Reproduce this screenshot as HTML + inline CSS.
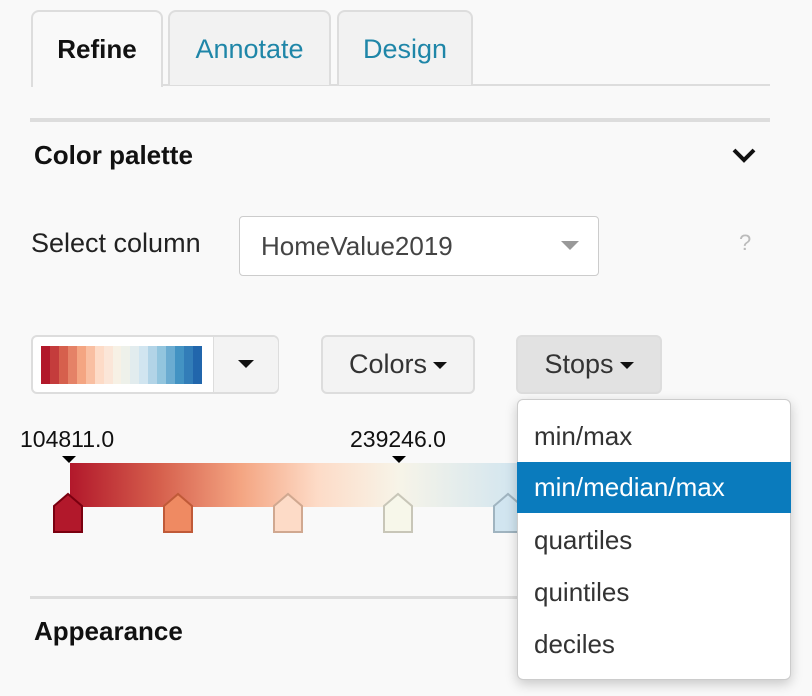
<!DOCTYPE html>
<html><head><style>
body{margin:0;width:812px;height:696px;background:#f9f9f9;font-family:"Liberation Sans",Arial,sans-serif;position:relative;overflow:hidden;color:#222}
.a{position:absolute}
.tab{position:absolute;top:10px;height:75px;border:2px solid #ddd;border-bottom:none;border-radius:8px 8px 0 0;background:#f2f2f2;box-sizing:border-box;font-size:26px;text-align:center;line-height:74px;color:#1f86a8}
.btn{position:absolute;border:2px solid #ddd;border-radius:6px;background:#f3f3f3;box-sizing:border-box;font-size:27px;color:#333;text-align:center}
.caret{display:inline-block;width:0;height:0;border-left:7px solid transparent;border-right:7px solid transparent;border-top:7px solid #111;vertical-align:middle;margin-left:6px}
.item{position:absolute;left:517px;width:274px;height:51px;line-height:51px;padding-left:17px;box-sizing:border-box;font-size:26px;color:#333}
</style></head><body>
<div class="a" style="left:162px;top:84px;width:608px;height:2px;background:#ddd"></div>
<div class="tab" style="left:31px;width:132px;background:#f9f9f9;height:77px;color:#111;font-weight:bold">Refine</div>
<div class="tab" style="left:168px;width:163px;font-size:27px">Annotate</div>
<div class="tab" style="left:337px;width:136px;font-size:27px">Design</div>
<div class="a" style="left:30px;top:118px;width:740px;height:4px;background:#ddd"></div>
<div class="a" style="left:34px;top:140px;font-size:26px;font-weight:bold;color:#111">Color palette</div>
<svg class="a" style="left:731px;top:146px" width="26" height="18"><path d="M3 4 L13 14 L23 4" stroke="#111" stroke-width="4" fill="none"/></svg>
<div class="a" style="left:31px;top:228px;font-size:27px;color:#222">Select column</div>
<div class="a" style="left:239px;top:216px;width:360px;height:60px;border:1px solid #ccc;border-radius:4px;background:#fff;box-sizing:border-box;font-size:26px;line-height:58px;padding-left:21px;color:#444">HomeValue2019</div>
<div class="a" style="left:561px;top:241px;border-left:9px solid transparent;border-right:9px solid transparent;border-top:9px solid #999"></div>
<div class="a" style="left:739px;top:230px;font-size:22px;color:#bbb">?</div>
<div class="btn" style="left:31px;top:335px;width:248px;height:59px;background:#fff"></div>
<div class="a" style="left:213px;top:337px;width:64px;height:55px;background:#f3f3f3;border-left:1px solid #ddd;border-radius:0 5px 5px 0"></div>
<div class="a" style="left:238px;top:360px;border-left:8px solid transparent;border-right:8px solid transparent;border-top:8px solid #111"></div>
<div class="a" style="left:41px;top:346px;width:161px;height:38px;display:flex">
<div style="flex:1;background:#b2182b"></div><div style="flex:1;background:#c43c3c"></div><div style="flex:1;background:#d6604d"></div><div style="flex:1;background:#e58267"></div><div style="flex:1;background:#f4a582"></div><div style="flex:1;background:#f9bfa2"></div><div style="flex:1;background:#fddbc7"></div><div style="flex:1;background:#fbe6d8"></div><div style="flex:1;background:#f7f1e5"></div><div style="flex:1;background:#eef1ea"></div><div style="flex:1;background:#e2ecee"></div><div style="flex:1;background:#d1e5f0"></div><div style="flex:1;background:#b2d4e7"></div><div style="flex:1;background:#92c5de"></div><div style="flex:1;background:#6bacd1"></div><div style="flex:1;background:#4393c3"></div><div style="flex:1;background:#327db8"></div><div style="flex:1;background:#2166ac"></div>
</div>
<div class="btn" style="left:321px;top:335px;width:154px;height:59px;line-height:55px">Colors<span class="caret"></span></div>
<div class="btn" style="left:516px;top:335px;width:146px;height:59px;line-height:55px;background:#e2e2e2">Stops<span class="caret"></span></div>
<div class="a" style="left:20px;top:426px;font-size:23px;color:#111">104811.0</div>
<div class="a" style="left:350px;top:426px;font-size:23px;color:#111">239246.0</div>
<div class="a" style="left:62px;top:456px;border-left:7px solid transparent;border-right:7px solid transparent;border-top:7px solid #000"></div>
<div class="a" style="left:392px;top:456px;border-left:7px solid transparent;border-right:7px solid transparent;border-top:7px solid #000"></div>
<div class="a" style="left:70px;top:463px;width:450px;height:44px;background:linear-gradient(90deg,#b2182b 0,#d6604d 20%,#f4a582 38%,#fddbc7 55%,#f7f4e8 73%,#d1e5f0 100%)"></div>
<svg class="a" style="left:52px;top:492px" width="480" height="42">
<g stroke-width="2">
<path d="M2 14 L16 2 L30 14 L30 40 L2 40Z" fill="#b2182b" stroke="#7a0010"/>
<path d="M112 14 L126 2 L140 14 L140 40 L112 40Z" fill="#ef8a62" stroke="#c05a38"/>
<path d="M222 14 L236 2 L250 14 L250 40 L222 40Z" fill="#fddbc7" stroke="#d0a890"/>
<path d="M332 14 L346 2 L360 14 L360 40 L332 40Z" fill="#f7f7ea" stroke="#c8c6b8"/>
<path d="M442 14 L456 2 L470 14 L470 40 L442 40Z" fill="#d1e5f0" stroke="#a0b4c0"/>
</g></svg>
<div class="a" style="left:30px;top:596px;width:740px;height:3px;background:#ddd"></div>
<div class="a" style="left:34px;top:616px;font-size:26px;font-weight:bold;color:#111">Appearance</div>
<div class="a" style="left:517px;top:399px;width:274px;height:281px;background:#fff;border:1px solid #ccc;border-radius:6px;box-sizing:border-box;box-shadow:0 4px 12px rgba(0,0,0,.2)"></div>
<div class="item" style="top:411px">min/max</div>
<div class="item" style="top:462px;background:#0a7bbd;color:#fff">min/median/max</div>
<div class="item" style="top:515px">quartiles</div>
<div class="item" style="top:567px">quintiles</div>
<div class="item" style="top:619px">deciles</div>
</body></html>
